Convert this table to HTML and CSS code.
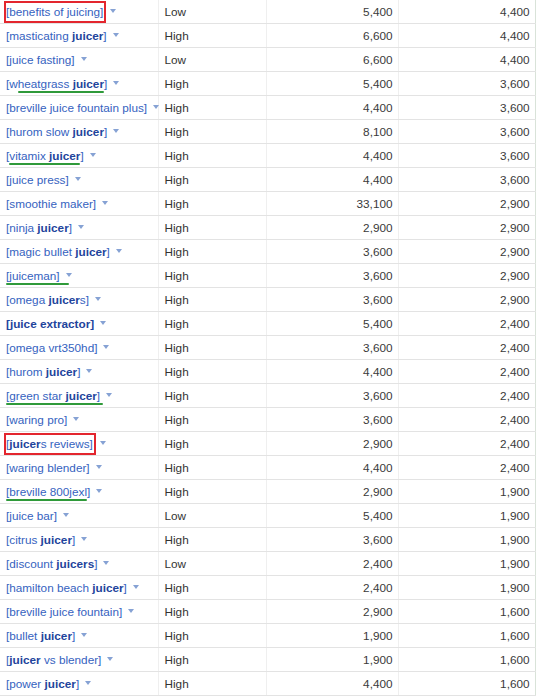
FILE: index.html
```html
<!DOCTYPE html>
<html>
<head>
<meta charset="utf-8">
<link rel="stylesheet" href="styles.css">
</head>
<body>
<table class="kw">
  <colgroup><col class="c1"><col class="c2"><col class="c3"><col class="c4"></colgroup>
  <tbody>
    <tr><td class="k"><span class="boxed">[benefits of juicing]</span><i class="dd"></i></td><td class="comp">Low</td><td class="n">5,400</td><td class="n last">4,400</td></tr>
    <tr><td class="k">[masticating <b>juicer</b>]<i class="dd"></i></td><td class="comp">High</td><td class="n">6,600</td><td class="n last">4,400</td></tr>
    <tr><td class="k">[juice fasting]<i class="dd"></i></td><td class="comp">Low</td><td class="n">6,600</td><td class="n last">4,400</td></tr>
    <tr><td class="k">[w<span class="ul">heatgrass <b>juicer</b></span>]<i class="dd"></i></td><td class="comp">High</td><td class="n">5,400</td><td class="n last">3,600</td></tr>
    <tr><td class="k">[breville juice fountain plus]<i class="dd"></i></td><td class="comp">High</td><td class="n">4,400</td><td class="n last">3,600</td></tr>
    <tr><td class="k">[hurom slow <b>juicer</b>]<i class="dd"></i></td><td class="comp">High</td><td class="n">8,100</td><td class="n last">3,600</td></tr>
    <tr><td class="k">[<span class="ul">vitamix <b>juicer</b></span>]<i class="dd"></i></td><td class="comp">High</td><td class="n">4,400</td><td class="n last">3,600</td></tr>
    <tr><td class="k">[juice press]<i class="dd"></i></td><td class="comp">High</td><td class="n">4,400</td><td class="n last">3,600</td></tr>
    <tr><td class="k">[smoothie maker]<i class="dd"></i></td><td class="comp">High</td><td class="n">33,100</td><td class="n last">2,900</td></tr>
    <tr><td class="k">[ninja <b>juicer</b>]<i class="dd"></i></td><td class="comp">High</td><td class="n">2,900</td><td class="n last">2,900</td></tr>
    <tr><td class="k">[magic bullet <b>juicer</b>]<i class="dd"></i></td><td class="comp">High</td><td class="n">3,600</td><td class="n last">2,900</td></tr>
    <tr><td class="k"><span class="ul ul-long">[juiceman]</span><i class="dd"></i></td><td class="comp">High</td><td class="n">3,600</td><td class="n last">2,900</td></tr>
    <tr><td class="k">[omega <b>juicer</b>s]<i class="dd"></i></td><td class="comp">High</td><td class="n">3,600</td><td class="n last">2,900</td></tr>
    <tr><td class="k"><b>[juice extractor]</b><i class="dd"></i></td><td class="comp">High</td><td class="n">5,400</td><td class="n last">2,400</td></tr>
    <tr><td class="k">[omega vrt350hd]<i class="dd"></i></td><td class="comp">High</td><td class="n">3,600</td><td class="n last">2,400</td></tr>
    <tr><td class="k">[hurom <b>juicer</b>]<i class="dd"></i></td><td class="comp">High</td><td class="n">4,400</td><td class="n last">2,400</td></tr>
    <tr><td class="k"><span class="ul ul-short">[green star <b>juicer</b>]</span><i class="dd"></i></td><td class="comp">High</td><td class="n">3,600</td><td class="n last">2,400</td></tr>
    <tr><td class="k">[waring pro]<i class="dd"></i></td><td class="comp">High</td><td class="n">3,600</td><td class="n last">2,400</td></tr>
    <tr><td class="k"><span class="boxed">[<b>juicer</b>s reviews]</span><i class="dd"></i></td><td class="comp">High</td><td class="n">2,900</td><td class="n last">2,400</td></tr>
    <tr><td class="k">[waring blender]<i class="dd"></i></td><td class="comp">High</td><td class="n">4,400</td><td class="n last">2,400</td></tr>
    <tr><td class="k"><span class="ul">[breville 800jexl</span>]<i class="dd"></i></td><td class="comp">High</td><td class="n">2,900</td><td class="n last">1,900</td></tr>
    <tr><td class="k">[juice bar]<i class="dd"></i></td><td class="comp">Low</td><td class="n">5,400</td><td class="n last">1,900</td></tr>
    <tr><td class="k">[citrus <b>juicer</b>]<i class="dd"></i></td><td class="comp">High</td><td class="n">3,600</td><td class="n last">1,900</td></tr>
    <tr><td class="k">[discount <b>juicers</b>]<i class="dd"></i></td><td class="comp">Low</td><td class="n">2,400</td><td class="n last">1,900</td></tr>
    <tr><td class="k">[hamilton beach <b>juicer</b>]<i class="dd"></i></td><td class="comp">High</td><td class="n">2,400</td><td class="n last">1,900</td></tr>
    <tr><td class="k">[breville juice fountain]<i class="dd"></i></td><td class="comp">High</td><td class="n">2,900</td><td class="n last">1,600</td></tr>
    <tr><td class="k">[bullet <b>juicer</b>]<i class="dd"></i></td><td class="comp">High</td><td class="n">1,900</td><td class="n last">1,600</td></tr>
    <tr><td class="k">[<b>juicer</b> vs blender]<i class="dd"></i></td><td class="comp">High</td><td class="n">1,900</td><td class="n last">1,600</td></tr>
    <tr><td class="k">[power <b>juicer</b>]<i class="dd"></i></td><td class="comp">High</td><td class="n">4,400</td><td class="n last">1,600</td></tr>
  </tbody>
</table>
</body>
</html>
```
FILE: styles.css
```css
html, body {
  margin: 0;
  padding: 0;
  background: #ffffff;
}

body {
  font-family: "Liberation Sans", Arial, sans-serif;
  font-size: 11.75px;
  color: #333333;
}

.kw {
  border-collapse: collapse;
  table-layout: fixed;
  width: 535px;
}

.c1 { width: 158px; }
.c2 { width: 108px; }
.c3 { width: 132px; }
.c4 { width: 137px; }

.kw td {
  height: 23px;
  padding: 0 5px;
  line-height: 14px;
  vertical-align: middle;
  border-bottom: 1px solid #e3e3e3;
  border-left: 1px solid #efefef;
  white-space: nowrap;
}

.kw td.k {
  border-left: none;
  color: #3562c0;
  padding-left: 6px;
}

.kw td.k b {
  color: #22449c;
  font-weight: bold;
}

.kw td.comp {
  padding-left: 6px;
  color: #333333;
}

.kw td.n {
  text-align: right;
  color: #3a3a3a;
}

.kw td.last {
  padding-right: 5px;
  border-right: 1px solid #d9e3d9;
}

.dd {
  display: inline-block;
  width: 0;
  height: 0;
  margin-left: 6px;
  border-left: 3.5px solid transparent;
  border-right: 3.5px solid transparent;
  border-top: 4px solid #86a2d4;
  vertical-align: 3px;
}

.boxed {
  padding: 2px 1px 3px 0;
  outline: 2px solid #e3262e;
}

.ul {
  position: relative;
}

.ul::after {
  content: "";
  position: absolute;
  left: 0;
  right: 0;
  bottom: -3px;
  height: 2px;
  background: #2f9a3a;
  border-radius: 1px;
}

.ul-long::after { right: -9px; }
.ul-short::after { right: -3px; }
```
